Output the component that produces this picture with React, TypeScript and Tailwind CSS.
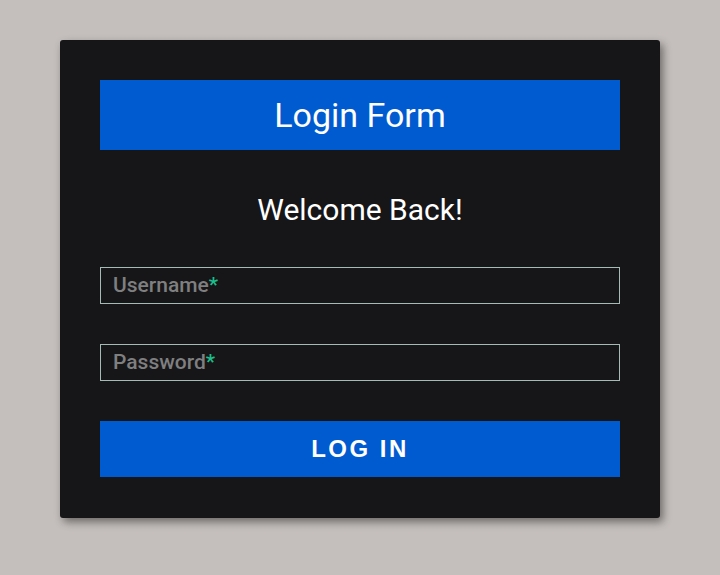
import React from "react";

export default function App() {
  return (
    <div className="w-[720px] h-[575px] bg-[#c4bfbc] pt-[40px]" style={{ fontFamily: "Roboto, 'Open Sans', sans-serif" }}>
      <div className="mx-auto w-[600px] h-[478px] bg-[#161618] rounded-[3px] shadow-[3px_4px_8px_rgba(0,0,0,0.45)] px-[40px] pt-[40px]">
        <div className="h-[70px] bg-[#005ad0] flex items-center justify-center text-white text-[34px]">
          Login Form
        </div>
        <div className="h-[117px] pt-[40px] text-center text-white text-[30px] leading-[40px]">
          Welcome Back!
        </div>
        <div className="h-[37px] border border-[#a4bab4] flex items-center px-[12px] text-[21px] font-medium text-[#7f7f80]">
          Username<span className="text-[#1abf8c]">*</span>
        </div>
        <div className="h-[37px] mt-[40px] border border-[#a4bab4] flex items-center px-[12px] text-[21px] font-medium text-[#7f7f80]">
          Password<span className="text-[#1abf8c]">*</span>
        </div>
        <button className="mt-[40px] w-full h-[56px] bg-[#005ad0] text-white text-[24px] font-bold tracking-[2.5px]" style={{ fontFamily: "'Liberation Sans', Arial, sans-serif" }}>
          LOG IN
        </button>
      </div>
    </div>
  );
}
